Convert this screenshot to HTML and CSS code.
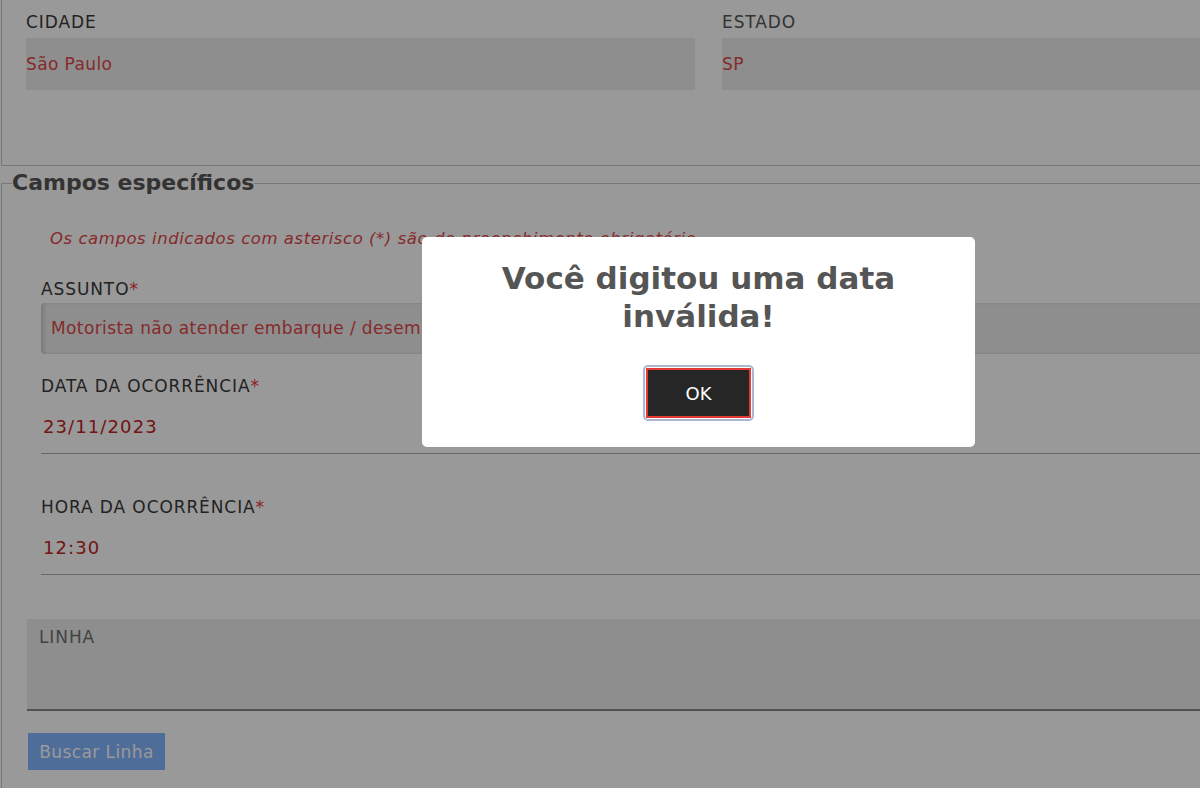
FILE: index.html
```html
<!DOCTYPE html>
<html lang="pt-BR">
<head>
<meta charset="utf-8">
<title>Formulário</title>
<link rel="stylesheet" href="styles.css">
</head>
<body>
<div class="page">
  <div class="box-top">
    <div class="row2">
      <div class="field">
        <div class="lbl">CIDADE</div>
        <div class="ro-input">São Paulo</div>
      </div>
      <div class="field">
        <div class="lbl lbl-soft">ESTADO</div>
        <div class="ro-input">SP</div>
      </div>
    </div>
  </div>

  <fieldset class="specific">
    <legend>Campos específicos</legend>
    <p class="note">Os campos indicados com asterisco (*) são do preenchimento obrigatório</p>

    <div class="group">
      <div class="lbl">ASSUNTO<span class="req">*</span></div>
      <div class="select">Motorista não atender embarque / desembarque</div>

      <div class="lbl lbl-date">DATA DA OCORRÊNCIA<span class="req">*</span></div>
      <div class="line-input">23/11/2023</div>

      <div class="lbl lbl-hora">HORA DA OCORRÊNCIA<span class="req">*</span></div>
      <div class="line-input">12:30</div>
    </div>

    <div class="linha-box"><span class="lbl-linha">LINHA</span></div>
    <button class="btn-buscar" type="button">Buscar Linha</button>
  </fieldset>
</div>

<div class="overlay">
  <div class="modal">
    <h2 class="modal-title">Você digitou uma data inválida!</h2>
    <div class="actions">
      <span class="ring"><button class="ok" type="button">OK</button></span>
    </div>
  </div>
</div>
</body>
</html>
```

FILE: styles.css
```css
* { box-sizing: border-box; }

html, body {
  margin: 0;
  padding: 0;
  background: #ffffff;
  overflow: hidden;
  height: 788px;
}

body {
  font-family: "DejaVu Sans", "Liberation Sans", sans-serif;
  color: #444;
}

.page {
  width: 1397px;
  padding-left: 1px;
}

/* upper block (scrolled, top border out of view) */
.box-top {
  border: 1px solid #c8c8c8;
  border-top: none;
  height: 166px;
  padding: 12px 0 0 24px;
}

.row2 {
  display: grid;
  grid-template-columns: 669px 668px;
  column-gap: 27px;
}

.lbl {
  font-size: 17px;
  line-height: 21px;
  letter-spacing: 0.9px;
  color: #3a3a3a;
}

.lbl-soft { color: #555; }

.ro-input {
  margin-top: 5px;
  height: 52px;
  background: #ededed;
  padding: 16px 0 0 0;
  font-size: 17px;
  line-height: 20px;
  letter-spacing: 0.4px;
  color: #e04848;
}

/* specific fieldset */
.specific {
  margin: 5px 0 0 0;
  padding: 0 0 0 25px;
  border: 1px solid #c8c8c8;
  border-bottom: none;
  min-width: 0;
  height: 640px;
}

.specific legend {
  margin-left: -15px;
  padding: 0;
  font-size: 22px;
  line-height: 24px;
  font-weight: bold;
  color: #555;
}

.note {
  margin: 34px 0 0 23px;
  font-size: 16.5px;
  line-height: 20px;
  letter-spacing: 0.55px;
  font-style: italic;
  color: #e04848;
}

.group {
  margin: 30px 0 0 14px;
}

.req { color: #e53935; letter-spacing: 0; }

.select {
  margin-top: 3px;
  height: 51px;
  border-radius: 4px;
  background: #ededed;
  box-shadow: inset 3px 0 3px rgba(0,0,0,0.12);
  padding: 15px 0 0 10px;
  font-size: 17px;
  line-height: 20px;
  letter-spacing: 0.4px;
  color: #e04848;
}

.lbl-date { margin-top: 22px; }
.lbl-hora { margin-top: 43px; }

.line-input {
  margin-top: 6px;
  height: 51px;
  border-bottom: 1px solid #adadad;
  padding: 13px 0 0 2px;
  font-size: 18px;
  line-height: 22px;
  letter-spacing: 1.1px;
  color: #c02424;
}

.linha-box {
  margin-top: 44px;
  height: 92px;
  background: #ededed;
  border-bottom: 2px solid #8a8a8a;
  padding: 8px 0 0 12px;
}

.lbl-linha {
  font-size: 17px;
  line-height: 20px;
  letter-spacing: 0.9px;
  color: #707070;
}

.btn-buscar {
  display: block;
  margin: 22px 0 0 1px;
  width: 137px;
  height: 37px;
  border: none;
  background: #82b6ff;
  color: #ffffff;
  font-family: "DejaVu Sans", "Liberation Sans", sans-serif;
  font-size: 17px;
  letter-spacing: 0.4px;
  padding: 0;
}

/* modal */
.overlay {
  position: fixed;
  inset: 0;
  background: rgba(0, 0, 0, 0.4);
}

.modal {
  position: absolute;
  left: 422px;
  top: 237px;
  width: 553px;
  height: 210px;
  background: #ffffff;
  border-radius: 5px;
  padding-top: 22px;
  text-align: center;
}

.modal-title {
  margin: 0 auto;
  width: 440px;
  font-size: 31px;
  line-height: 38px;
  font-weight: bold;
  color: #555555;
}

.actions {
  margin-top: 30px;
  display: flex;
  justify-content: center;
}

.ring {
  display: inline-block;
  padding: 1px;
  border: 2px solid #a9b7cf;
  border-radius: 5px;
}

.ok {
  display: block;
  width: 105px;
  height: 50px;
  background: #262626;
  border: 2px solid #e53935;
  color: #ffffff;
  font-family: "DejaVu Sans", "Liberation Sans", sans-serif;
  font-size: 18px;
  padding: 0;
}
```
